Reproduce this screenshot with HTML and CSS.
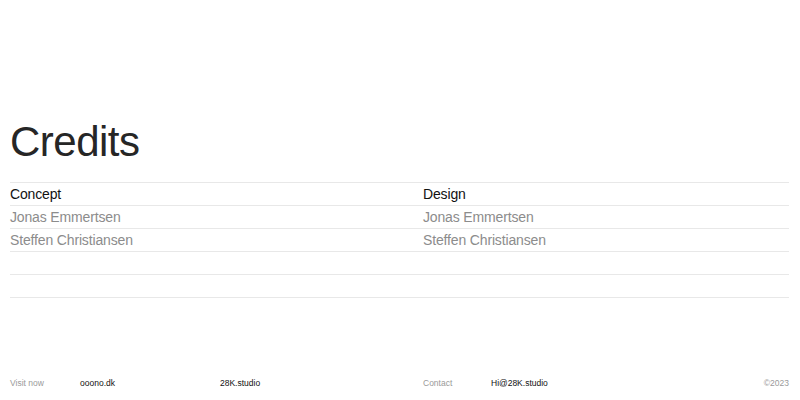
FILE: index.html
```html
<!DOCTYPE html>
<html lang="en">
<head>
<meta charset="UTF-8">
<meta name="viewport" content="width=device-width, initial-scale=1.0">
<title>Credits</title>
<link rel="stylesheet" href="styles.css">
</head>
<body>
<div class="page">
    <main class="credits">
        <h1>Credits</h1>
        <div class="table">
            <div class="row head">
                <span>Concept</span>
                <span>Design</span>
            </div>
            <div class="row">
                <span>Jonas Emmertsen</span>
                <span>Jonas Emmertsen</span>
            </div>
            <div class="row">
                <span>Steffen Christiansen</span>
                <span>Steffen Christiansen</span>
            </div>
            <div class="row"></div>
            <div class="row"></div>
        </div>
    </main>

    <footer class="footer">
        <span class="muted">Visit now</span>
        <a href="#">ooono.dk</a>
        <a href="#">28K.studio</a>
        <span class="muted">Contact</span>
        <a href="#">Hi@28K.studio</a>
        <span class="muted copy">&copy;2023</span>
    </footer>
</div>
</body>
</html>
```

FILE: styles.css
```css
body {
    margin: 0;
    font-family: "Liberation Sans", Arial, sans-serif;
    background-color: #fff;
    color: #111;
}
.page {
    height: 100vh;
    padding: 0 11px 0 10px;
    box-sizing: border-box;
    display: flex;
    flex-direction: column;
}
.credits {
    flex: 1;
}
h1 {
    margin: 121px 0 19px;
    font-size: 42px;
    line-height: 42px;
    font-weight: normal;
    letter-spacing: -0.5px;
    color: #262626;
}
.table {
    border-bottom: 1px solid #e8e8e8;
}
.row {
    display: grid;
    grid-template-columns: 413px 1fr;
    height: 22px;
    border-top: 1px solid #e8e8e8;
    font-size: 14px;
    line-height: 22px;
    letter-spacing: -0.15px;
    color: #8c8c8c;
}
.row.head {
    color: #111;
}
.footer {
    display: grid;
    grid-template-columns: 70px 140px 203px 68px 1fr auto;
    padding: 0 0 11px 0;
    font-size: 8.5px;
    line-height: 12px;
}
.footer a {
    color: #111;
    text-decoration: none;
}
.muted {
    color: #9a9a9a;
}
.copy {
    text-align: right;
}
```
